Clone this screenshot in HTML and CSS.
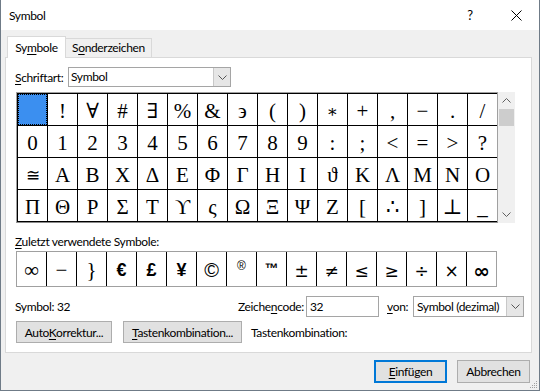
FILE: index.html
```html
<!DOCTYPE html>
<html lang="de">

<head>
    <meta charset="utf-8">
    <title>Symbol</title>
    <link rel="stylesheet" href="styles.css">
</head>

<body>
    <div class="window">
        <div class="titlebar">
            <span class="title">Symbol</span>
            <span class="tbtn help">?</span>
            <span class="tbtn close">
                <svg width="11" height="11" viewBox="0 0 11 11"><path d="M0.5 0.5 L10.5 10.5 M10.5 0.5 L0.5 10.5" stroke="#000" stroke-width="1" fill="none"/></svg>
            </span>
        </div>

        <div class="tabs">
            <div class="tab valgt">Sy<u>m</u>bole</div>
            <div class="tab">S<u>o</u>nderzeichen</div>
        </div>

        <div class="panel">
            <div class="font-row">
                <span class="lbl"><u>S</u>chriftart:</span>
                <div class="combo font-combo">
                    <span class="combo-text">Symbol</span>
                    <span class="combo-btn">
                        <svg width="9" height="5" viewBox="0 0 9 5"><path d="M0.5 0.5 L4.5 4.5 L8.5 0.5" stroke="#555" fill="none"/></svg>
                    </span>
                </div>
            </div>

            <div class="grid-wrap">
                <div class="grid">
                    <div class="cell sel"><span class="focus"></span></div>
                    <div class="cell">!</div>
                    <div class="cell">∀</div>
                    <div class="cell">#</div>
                    <div class="cell">∃</div>
                    <div class="cell">%</div>
                    <div class="cell">&amp;</div>
                    <div class="cell">϶</div>
                    <div class="cell">(</div>
                    <div class="cell">)</div>
                    <div class="cell star">∗</div>
                    <div class="cell">+</div>
                    <div class="cell">,</div>
                    <div class="cell">−</div>
                    <div class="cell">.</div>
                    <div class="cell">/</div>

                    <div class="cell">0</div>
                    <div class="cell">1</div>
                    <div class="cell">2</div>
                    <div class="cell">3</div>
                    <div class="cell">4</div>
                    <div class="cell">5</div>
                    <div class="cell">6</div>
                    <div class="cell">7</div>
                    <div class="cell">8</div>
                    <div class="cell">9</div>
                    <div class="cell">:</div>
                    <div class="cell">;</div>
                    <div class="cell">&lt;</div>
                    <div class="cell">=</div>
                    <div class="cell">&gt;</div>
                    <div class="cell">?</div>

                    <div class="cell small">≅</div>
                    <div class="cell">Α</div>
                    <div class="cell">Β</div>
                    <div class="cell">Χ</div>
                    <div class="cell">Δ</div>
                    <div class="cell">Ε</div>
                    <div class="cell">Φ</div>
                    <div class="cell">Γ</div>
                    <div class="cell">Η</div>
                    <div class="cell">Ι</div>
                    <div class="cell">ϑ</div>
                    <div class="cell">Κ</div>
                    <div class="cell">Λ</div>
                    <div class="cell">Μ</div>
                    <div class="cell">Ν</div>
                    <div class="cell">Ο</div>

                    <div class="cell">Π</div>
                    <div class="cell">Θ</div>
                    <div class="cell">Ρ</div>
                    <div class="cell">Σ</div>
                    <div class="cell">Τ</div>
                    <div class="cell">ϒ</div>
                    <div class="cell">ς</div>
                    <div class="cell">Ω</div>
                    <div class="cell">Ξ</div>
                    <div class="cell">Ψ</div>
                    <div class="cell">Ζ</div>
                    <div class="cell">[</div>
                    <div class="cell">∴</div>
                    <div class="cell">]</div>
                    <div class="cell">⊥</div>
                    <div class="cell">_</div>
                </div>
                <div class="scrollbar">
                    <svg width="9" height="5" viewBox="0 0 9 5"><path d="M0.5 4.5 L4.5 0.5 L8.5 4.5" stroke="#606060" fill="none"/></svg>
                    <div class="thumb"></div>
                    <div class="track"></div>
                    <svg width="9" height="5" viewBox="0 0 9 5"><path d="M0.5 0.5 L4.5 4.5 L8.5 0.5" stroke="#606060" fill="none"/></svg>
                </div>
            </div>

            <div class="recent-lbl"><u>Z</u>uletzt verwendete Symbole:</div>
            <div class="recent">
                <div class="rc serif">∞</div>
                <div class="rc serif">−</div>
                <div class="rc serif">}</div>
                <div class="rc bold">€</div>
                <div class="rc bold">£</div>
                <div class="rc bold">¥</div>
                <div class="rc copy">©</div>
                <div class="rc tiny">®</div>
                <div class="rc tiny b">™</div>
                <div class="rc math">±</div>
                <div class="rc math">≠</div>
                <div class="rc math">≤</div>
                <div class="rc math">≥</div>
                <div class="rc math">÷</div>
                <div class="rc math">×</div>
                <div class="rc inf">∞</div>
            </div>

            <div class="code-row">
                <span class="sym-info">Symbol: 32</span>
                <span class="code-lbl">Zeiche<u>n</u>code:</span>
                <div class="input">32</div>
                <span class="von-lbl"><u>v</u>on:</span>
                <div class="combo von-combo">
                    <span class="combo-text">Symbol (dezimal)</span>
                    <span class="combo-btn">
                        <svg width="9" height="5" viewBox="0 0 9 5"><path d="M0.5 0.5 L4.5 4.5 L8.5 0.5" stroke="#555" fill="none"/></svg>
                    </span>
                </div>
            </div>

            <div class="btn-row">
                <button class="knap auto">Auto<u>K</u>orrektur...</button>
                <button class="knap tasten"><u>T</u>astenkombination...</button>
                <span class="tasten-lbl">Tastenkombination:</span>
            </div>
        </div>

        <div class="footer">
            <button class="knap primary"><u>E</u>infügen</button>
            <button class="knap">Abbrechen</button>
        </div>

        <svg class="grip" width="10" height="10" viewBox="0 0 10 10">
            <rect x="8" y="2" width="1" height="1" fill="#a0a0a0"/>
            <rect x="6" y="4" width="1" height="1" fill="#a0a0a0"/>
            <rect x="8" y="4" width="1" height="1" fill="#a0a0a0"/>
            <rect x="4" y="6" width="1" height="1" fill="#a0a0a0"/>
            <rect x="6" y="6" width="1" height="1" fill="#a0a0a0"/>
            <rect x="8" y="6" width="1" height="1" fill="#a0a0a0"/>
            <rect x="2" y="8" width="1" height="1" fill="#a0a0a0"/>
            <rect x="4" y="8" width="1" height="1" fill="#a0a0a0"/>
            <rect x="6" y="8" width="1" height="1" fill="#a0a0a0"/>
            <rect x="8" y="8" width="1" height="1" fill="#a0a0a0"/>
        </svg>
    </div>
</body>

</html>
```

FILE: styles.css
```css
* {
    box-sizing: border-box;
}

html,
body {
    margin: 0;
    padding: 0;
}

body {
    width: 540px;
    height: 391px;
    overflow: hidden;
    font-family: Lato, "Noto Sans", sans-serif;
    font-size: 12px;
    letter-spacing: -0.35px;
    color: #000;
}

u {
    text-decoration-thickness: 1px;
    text-underline-offset: 2px;
}

.window {
    position: relative;
    width: 540px;
    height: 391px;
    background: #f0f0f0;
    border: 1px solid #6f7b87;
    border-top: none;
}

.titlebar {
    height: 30px;
    background: #fff;
    display: flex;
    align-items: center;
    padding-left: 8px;
}

.title {
    flex: 1;
}

.tbtn {
    width: 46px;
    height: 30px;
    display: flex;
    align-items: center;
    justify-content: center;
}

.help {
    font-size: 13px;
}

.close {
    padding-top: 1px;
}

/* faner */
.tabs {
    display: flex;
    align-items: flex-end;
    margin: 6px 0 0 6px;
    height: 21px;
    position: relative;
    z-index: 1;
}

.tab {
    width: 86px;
    height: 19px;
    background: #f0f0f0;
    border: 1px solid #d9d9d9;
    border-bottom: none;
    border-left: none;
    line-height: 17px;
    text-align: center;
    white-space: nowrap;
}

.tab.valgt {
    width: 59px;
    height: 22px;
    margin-bottom: -1px;
    background: #fff;
    border-left: 1px solid #d9d9d9;
    line-height: 21px;
}

.panel {
    margin-left: 4px;
    width: 527px;
    height: 296px;
    background: #fff;
    border: 1px solid #d9d9d9;
    padding-left: 9px;
}

.font-row {
    display: flex;
    align-items: center;
    margin-top: 9px;
    height: 20px;
}

.lbl {
    width: 53px;
    white-space: nowrap;
}

.combo {
    display: flex;
    height: 20px;
    border: 1px solid #a5a5a5;
    background: #fff;
}

.combo-text {
    flex: 1;
    padding-left: 2px;
    line-height: 18px;
    white-space: nowrap;
    overflow: hidden;
}

.combo-btn {
    width: 17px;
    background: #e6e6e6;
    border-left: 1px solid #c8c8c8;
    display: flex;
    align-items: center;
    justify-content: center;
}

.font-combo {
    width: 163px;
}

/* tegn-gitter */
.grid-wrap {
    display: flex;
    margin: 5px 0 0 1px;
}

.grid {
    display: grid;
    grid-template-columns: repeat(16, 29px);
    grid-auto-rows: 31px;
    gap: 1px;
    background: #000;
    padding: 1px 0 1px 1px;
    border: 1px solid #a0a0a0;
    border-bottom-color: #8a8a8a;
}

.cell {
    position: relative;
    background: #fff;
    text-align: center;
    font-family: "Liberation Serif", "DejaVu Serif", serif;
    font-size: 21px;
    letter-spacing: 0;
    line-height: 27px;
    padding-top: 4px;
}

.cell.small {
    font-size: 17px;
}

.cell.star {
    font-size: 17px;
}

.cell.sel {
    background: #3b8ff0;
}

.focus {
    position: absolute;
    inset: 0;
    border: 1px dotted #000;
}

.scrollbar {
    width: 17px;
    height: 131px;
    background: #f0f0f0;
    display: flex;
    flex-direction: column;
    align-items: center;
    padding: 6px 0 6px;
}

.thumb {
    width: 15px;
    height: 17px;
    margin-top: 6px;
    background: #cdcdcd;
}

.track {
    flex: 1;
}

/* senest brugte */
.recent-lbl {
    margin-top: 11px;
    height: 15px;
    line-height: 15px;
}

.recent {
    display: grid;
    grid-template-columns: repeat(16, 29px);
    grid-auto-rows: 34px;
    gap: 1px;
    background: #000;
    border: 1px solid #a0a0a0;
    width: 481px;
    margin: 2px 0 0 1px;
}

.rc {
    background: #fff;
    display: flex;
    align-items: center;
    justify-content: center;
    padding-top: 3px;
    letter-spacing: 0;
    font-family: "DejaVu Sans", sans-serif;
}

.rc.serif {
    font-family: "Liberation Serif", serif;
    font-size: 21px;
}

.rc.bold {
    font-family: "Liberation Sans", sans-serif;
    font-weight: bold;
    font-size: 18px;
}

.rc.copy {
    font-family: "Liberation Sans", sans-serif;
    font-size: 20px;
}

.rc.tiny {
    font-family: "Liberation Sans", sans-serif;
    font-size: 12px;
    align-items: flex-start;
    padding-top: 7px;
}

.rc.b {
    font-weight: bold;
    font-size: 14px;
    padding-top: 8px;
}

.rc.math {
    font-size: 17px;
}

.rc.inf {
    font-size: 20px;
    font-weight: bold;
}

/* kode-linje */
.code-row {
    display: flex;
    align-items: center;
    margin-top: 9px;
    height: 21px;
    white-space: nowrap;
}

.sym-info {
    width: 223px;
}

.code-lbl {
    width: 68px;
}

.input {
    width: 73px;
    height: 21px;
    border: 1px solid #a5a5a5;
    padding-left: 3px;
    line-height: 19px;
}

.von-lbl {
    margin-left: 8px;
    width: 26px;
}

.von-combo {
    width: 111px;
    height: 21px;
}

.von-combo .combo-text {
    line-height: 19px;
    padding-left: 3px;
}

.btn-row {
    display: flex;
    align-items: center;
    margin-top: 4px;
}

.knap {
    font-family: Lato, "Noto Sans", sans-serif;
    font-size: 12px;
    letter-spacing: -0.35px;
    height: 22px;
    padding: 0;
    background: #e1e1e1;
    border: 1px solid #adadad;
    color: #000;
    white-space: nowrap;
}

.auto {
    width: 96px;
    margin-left: 1px;
}

.tasten {
    width: 119px;
    margin-left: 11px;
}

.tasten-lbl {
    margin-left: 9px;
}

.footer {
    display: flex;
    justify-content: flex-end;
    gap: 10px;
    margin: 7px 9px 0 0;
}

.footer .knap {
    width: 73px;
    height: 23px;
}

.footer .primary {
    border: 2px solid #0078d7;
}

.grip {
    position: absolute;
    right: 1px;
    bottom: 1px;
}
```
